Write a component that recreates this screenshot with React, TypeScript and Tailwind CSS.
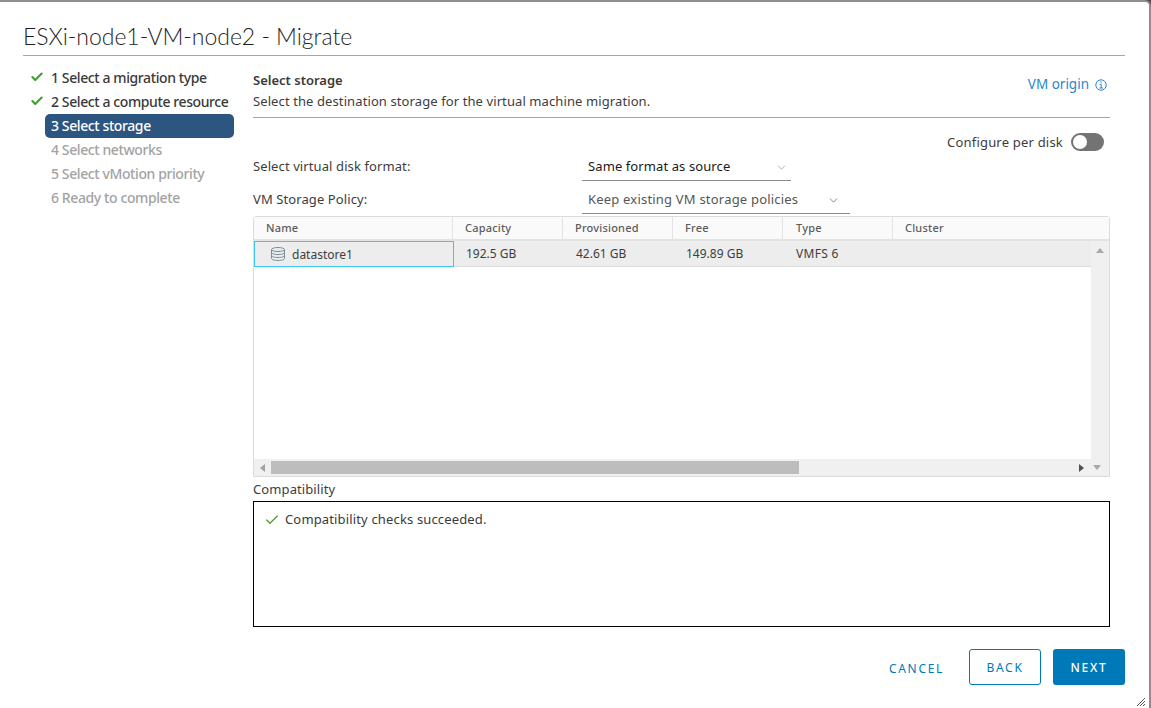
import { Check, ChevronDown } from 'lucide-react';

const steps = [
	{ label: '1 Select a migration type', state: 'done' },
	{ label: '2 Select a compute resource', state: 'done' },
	{ label: '3 Select storage', state: 'active' },
	{ label: '4 Select networks', state: 'todo' },
	{ label: '5 Select vMotion priority', state: 'todo' },
	{ label: '6 Ready to complete', state: 'todo' },
];

const columns = [
	{ name: 'Name', cls: 'w-[199px] pl-[12px]' },
	{ name: 'Capacity', cls: 'w-[110px] pl-[12px]' },
	{ name: 'Provisioned', cls: 'w-[110px] pl-[12px]' },
	{ name: 'Free', cls: 'w-[110px] pl-[12px]' },
	{ name: 'Type', cls: 'w-[110px] pl-[13px]' },
	{ name: 'Cluster', cls: 'flex-1 pl-[12px]' },
];

const Field = ({ label, value, width, muted, chevron }: { label: string; value: string; width: string; muted?: boolean; chevron: string }) => (
	<div className="flex items-center h-[33px]">
		<div className="w-[329px] pt-[1px] text-[13px] tracking-[0.1px] text-[#3d3d3d]">{label}</div>
		<div className={`${width} h-[28px] border-b border-[#8c8c8c] flex items-center justify-between pl-[6px] pt-[2px] text-[13px] ${muted ? 'text-[#565656] tracking-[0.2px]' : 'text-[#1a1a1a] tracking-[0.1px]'}`}>
			<span>{value}</span>
			<ChevronDown size={13} strokeWidth={1.5} className={chevron} />
		</div>
	</div>
);

const DatastoreIcon = () => (
	<svg width="16" height="16" viewBox="0 0 16 16" fill="#e6edf0" stroke="#7c8a92" strokeWidth="1" className="mb-[2px]">
		<path d="M1.5 3.5v9c0 1.2 2.9 2 6.5 2s6.5-.8 6.5-2v-9" />
		<ellipse cx="8" cy="3.5" rx="6.5" ry="2" />
		<path d="M1.5 6.5c0 1.2 2.9 2 6.5 2s6.5-.8 6.5-2M1.5 9.5c0 1.2 2.9 2 6.5 2s6.5-.8 6.5-2" fill="none" />
	</svg>
);

const InfoIcon = () => (
	<svg width="12" height="12" viewBox="0 0 12 12" fill="none" stroke="currentColor" strokeWidth="1" className="mt-[5px]">
		<circle cx="6" cy="6" r="5.2" />
		<path d="M4.5 5.3H6.2V9M4.4 9H7.8" />
		<path d="M5.4 3.2H6.6" strokeWidth="1.2" />
	</svg>
);

export default function App() {
	return (
		<div className="w-[1151px] h-[708px] bg-[#4a4a4a] overflow-hidden" style={{ fontFamily: '"Noto Sans", "Open Sans", sans-serif' }}>
			<div className="relative w-[1151px] h-[708px] bg-white border-t-2 border-r-2 border-[#8f8f8f] rounded-tr-[6px] flex flex-col pl-[23px] pr-[24px]">
				<div className="h-[54px] border-b border-[#a6a6a6] pt-[17px] text-[23px] leading-[34px] font-light tracking-[-0.03px] text-[#1f1f1f]" style={{ fontFamily: 'Lato, sans-serif' }}>
					ESXi-node1-VM-node2 - Migrate
				</div>
				<div className="flex flex-1">
					<div className="w-[230px] shrink-0 pt-[10px] pl-[7px]">
						{steps.map((s) => (
							<div key={s.label} className="flex items-center h-[24px]">
								<div className="w-[15px] shrink-0 pb-[2px]">
									{s.state === 'done' && <Check size={14} strokeWidth={3.5} className="text-[#3aa02c]" />}
								</div>
								<div
									className={`w-[189px] h-[24px] pl-[6px] pb-[2px] flex items-center text-[14px] font-medium tracking-[-0.4px] rounded-[5px] ${
										s.state === 'active' ? 'bg-[#2c5580] text-white' : s.state === 'done' ? 'text-[#3a3a3a]' : 'text-[#a3a3a3]'
									}`}
								>
									{s.label}
								</div>
							</div>
						))}
					</div>
					<div className="w-[857px] shrink-0">
						<div className="h-[62px] border-b border-[#a6a6a6] flex justify-between pt-[14px]">
							<div>
								<div className="text-[13px] leading-[20px] font-semibold text-[#3a3a3a]">Select storage</div>
								<div className="text-[13px] leading-[20px] tracking-[0.1px] mt-[1px] text-[#3d3d3d]">Select the destination storage for the virtual machine migration.</div>
							</div>
							<div className="flex items-start gap-[6px] pr-[3px] pt-[4px] text-[13.5px] leading-[20px] text-[#2e86c8]">
								<span>VM origin</span>
								<InfoIcon />
							</div>
						</div>
						<div className="flex justify-end items-center gap-[8px] h-[32px] pt-[16px] pr-[6px] text-[13px] tracking-[0.2px] text-[#3d3d3d]">
							<span className="pt-[2px]">Configure per disk</span>
							<div className="w-[33px] h-[18px] rounded-full bg-[#737373] p-[2px]">
								<div className="w-[14px] h-[14px] rounded-full bg-white" />
							</div>
						</div>
						<Field label="Select virtual disk format:" value="Same format as source" width="w-[209px]" chevron="mr-[3px] text-[#a0a0a0]" />
						<Field label="VM Storage Policy:" value="Keep existing VM storage policies" width="w-[268px]" muted chevron="mr-[10px] text-[#6b6b6b]" />
						<div className="h-[261px] border border-[#dcdcdc] rounded-t-[3px] flex flex-col">
							<div className="h-[24px] flex bg-[#fafafa] border-b-2 border-[#e3e3e3] text-[11px] font-medium tracking-[0.2px] text-[#5c5c5c] shrink-0">
								{columns.map((c, i) => (
									<div key={c.name} className={`${c.cls} flex items-center ${i < 5 ? 'border-r border-[#e3e3e3]' : ''}`}>
										{c.name}
									</div>
								))}
							</div>
							<div className="flex flex-1 min-h-0">
								<div className="flex-1 flex flex-col min-w-0">
									<div className="h-[26px] flex bg-[#ededed] border-b border-[#dedede] text-[12px] text-[#3d3d3d] shrink-0">
										<div className="w-[200px] h-[26px] border border-[#38c8f0] flex items-center gap-[6px] pl-[15px] pt-[1px]">
											<DatastoreIcon />
											<span>datastore1</span>
										</div>
										<div className="w-[110px] flex items-center pl-[12px]">192.5 GB</div>
										<div className="w-[110px] flex items-center pl-[12px]">42.61 GB</div>
										<div className="w-[110px] flex items-center pl-[12px]">149.89 GB</div>
										<div className="w-[110px] flex items-center pl-[12px] tracking-[0.3px]">VMFS 6</div>
									</div>
									<div className="flex-1" />
								</div>
								<div className="w-[18px] bg-[#f0f0f0] flex justify-center pt-[7px]">
									<div className="w-0 h-0 border-x-[4px] border-x-transparent border-b-[5px] border-b-[#a8a8a8]" />
								</div>
							</div>
							<div className="h-[17px] bg-[#f0f0f0] flex items-center shrink-0">
								<div className="w-[17px] flex justify-center">
									<div className="w-0 h-0 border-y-[4px] border-y-transparent border-r-[5px] border-r-[#a0a0a0]" />
								</div>
								<div className="w-[528px] h-[13px] bg-[#bdbdbd]" />
								<div className="flex-1 flex justify-end items-center gap-[9px] pr-[8px]">
									<div className="w-0 h-0 border-y-[4px] border-y-transparent border-l-[5px] border-l-[#505050]" />
									<div className="w-0 h-0 border-x-[4px] border-x-transparent border-t-[5px] border-t-[#a8a8a8]" />
								</div>
							</div>
						</div>
						<div className="mt-[3px] h-[21px] text-[13px] leading-[19px] tracking-[0.1px] text-[#3d3d3d]">Compatibility</div>
						<div className="h-[126px] border-[1.5px] border-black flex items-start gap-[5px] pl-[10px] pt-[7px] text-[13px] leading-[20px] tracking-[0.15px] text-[#3a3a3a]">
							<Check size={16} strokeWidth={2} className="text-[#5c9a3c] mt-[3px]" />
							<span>Compatibility checks succeeded.</span>
						</div>
					</div>
				</div>
				<div className="absolute right-[24px] bottom-[23px] flex items-center text-[12px] tracking-[1.7px]">
					<div className="text-[#0079b8] mr-[24px] w-[57px] text-center pt-[4px]">CANCEL</div>
					<div className="w-[72px] h-[36px] pt-[2px] flex items-center justify-center border border-[#0079b8] rounded-[3px] text-[#0079b8] mr-[12px]">BACK</div>
					<div className="w-[72px] h-[36px] pt-[2px] flex items-center justify-center bg-[#0079b8] rounded-[3px] text-white font-medium">NEXT</div>
				</div>
				<svg className="absolute right-[4px] bottom-[2px]" width="8" height="8" viewBox="0 0 8 8" stroke="#555" strokeWidth="1">
					<path d="M0 8L8 0M3 8L8 3M6 8L8 6" />
				</svg>
			</div>
		</div>
	);
}
